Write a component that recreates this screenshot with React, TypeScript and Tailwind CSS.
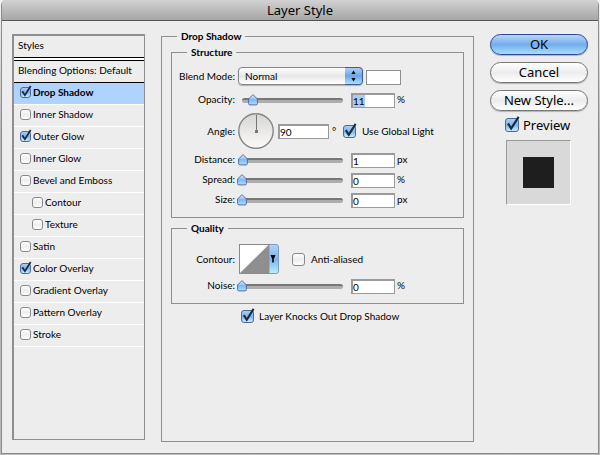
import { useId, useState, type ReactNode } from "react";
import clsx from "clsx";

type Effect = { name: string; checked?: boolean; selected?: boolean; nested?: boolean };

const effects: Effect[] = [
  { name: "Drop Shadow", checked: true, selected: true },
  { name: "Inner Shadow" },
  { name: "Outer Glow", checked: true },
  { name: "Inner Glow" },
  { name: "Bevel and Emboss" },
  { name: "Contour", nested: true },
  { name: "Texture", nested: true },
  { name: "Satin" },
  { name: "Color Overlay", checked: true },
  { name: "Gradient Overlay" },
  { name: "Pattern Overlay" },
  { name: "Stroke" },
];

const boxSizes = {
  sm: "size-[11px]",
  md: "size-[13px]",
  lg: "size-[14px]",
};

function Checkbox({ label, size = "md", defaultChecked = false, className }: { label: string; size?: keyof typeof boxSizes; defaultChecked?: boolean; className?: string }) {
  return (
    <label className={clsx("flex items-center whitespace-nowrap", className)}>
      <span className={clsx("relative shrink-0", boxSizes[size])}>
        <input
          type="checkbox"
          defaultChecked={defaultChecked}
          className="peer block size-full appearance-none rounded-[3px] border border-[#8a8a8a] bg-linear-to-b from-white via-[#eeeeee] to-white checked:border-[#4d6a96] checked:from-[#a9cdf3] checked:via-[#7fb5ee] checked:to-[#c4ecff]"
        />
        <svg viewBox="0 0 14 14" className="pointer-events-none absolute inset-0 hidden size-full overflow-visible peer-checked:block">
          <path d="M3 5.5 L6.2 10.5 L13.6 -1.2" fill="none" stroke="#1c2a3c" strokeWidth="2.2" />
        </svg>
      </span>
      {label}
    </label>
  );
}

function Group({ title, className, children }: { title: string; className?: string; children: ReactNode }) {
  return (
    <fieldset className={clsx("min-w-0 border border-[#8f8f8f]", className)}>
      <legend className="ml-[15px] h-3 px-1 leading-3 font-bold">{title}</legend>
      {children}
    </fieldset>
  );
}

function NumberBox({ id, value, onChange, className }: { id: string; value: string; onChange: (value: string) => void; className: string }) {
  return (
    <input
      id={id}
      type="text"
      value={value}
      onChange={(event) => onChange(event.target.value)}
      className={clsx("h-[15px] shrink-0 border-2 border-r border-b border-[#9a9a9a] bg-white leading-3 outline-none", className)}
    />
  );
}

function SliderRow({ label, initial, unit, highlighted = false }: { label: string; initial: number; unit: string; highlighted?: boolean }) {
  const id = useId();
  const [value, setValue] = useState(String(initial));
  const position = Math.min(100, Math.max(0, Number(value) || 0));

  return (
    <div className="flex h-4 items-start">
      <label htmlFor={id} className="w-[63px] shrink-0 text-right leading-3">{label}</label>
      <div className="relative ml-[7px] h-4 w-[101px] shrink-0">
        <div className="mt-[5px] h-[5px] rounded-full border-t-2 border-[#777777] bg-[#adadad]" />
        <svg viewBox="0 0 10 12" className="absolute top-px h-3 w-[10px] -translate-x-1/2" style={{ left: `${position}%` }}>
          <defs>
            <linearGradient id={`${id}-thumb`} x1="0" y1="0" x2="0" y2="1">
              <stop offset="0" stopColor="#e8f2ff" />
              <stop offset="0.5" stopColor="#7fb8f5" />
              <stop offset="1" stopColor="#aee2ff" />
            </linearGradient>
          </defs>
          <path d="M5 0.6 L9.4 5 V9.5 Q9.4 10.9 8 10.9 H2 Q0.6 10.9 0.6 9.5 V5 Z" fill={`url(#${id}-thumb)`} stroke="#5a6ca8" />
        </svg>
        <input
          type="range"
          min={0}
          max={100}
          value={position}
          aria-label={label}
          onChange={(event) => setValue(event.target.value)}
          className="absolute inset-0 w-full opacity-0"
        />
      </div>
      <NumberBox id={id} value={value} onChange={setValue} className={clsx("ml-2 w-11", highlighted && "bg-linear-to-r from-[#aaccf8] from-[12px] to-white to-[12px]")} />
      <span className="ml-0.5 leading-3">{unit}</span>
    </div>
  );
}

function AngleDial() {
  return (
    <svg viewBox="0 0 36 36" className="ml-[3px] size-9 shrink-0">
      <defs>
        <linearGradient id="dial" x1="0" y1="0" x2="0" y2="1">
          <stop offset="0" stopColor="#d6d6d6" />
          <stop offset="1" stopColor="#fbfaf7" />
        </linearGradient>
      </defs>
      <circle cx="18" cy="18" r="17.2" fill="url(#dial)" stroke="#858585" strokeWidth="1.4" />
      <path d="M18.5 2 V18" stroke="#777777" />
      <rect x="17" y="17" width="3" height="3" fill="#777777" />
    </svg>
  );
}

function ContourPicker() {
  return (
    <button type="button" aria-label="Contour" className="ml-1 h-[30px] w-10 shrink-0">
      <svg viewBox="0 0 40 30" className="size-full">
        <defs>
          <linearGradient id="picker" x1="0" y1="0" x2="0" y2="1">
            <stop offset="0" stopColor="#b5d3f5" />
            <stop offset="0.5" stopColor="#7db4ee" />
            <stop offset="1" stopColor="#bdeeff" />
          </linearGradient>
        </defs>
        <path d="M30 0.5 H37 Q39.5 0.5 39.5 3 V27 Q39.5 29.5 37 29.5 H30 Z" fill="url(#picker)" stroke="#7c9cc4" />
        <rect x="0.5" y="0.5" width="29" height="29" fill="white" stroke="#8a8a8a" />
        <path d="M1 29 L29.5 1 V29.5 H1 Z" fill="#8f8f8f" />
        <path d="M31.5 11 H36.5 L34.8 15 V18.5 H33.2 V15 Z" fill="black" />
      </svg>
    </button>
  );
}

function DialogButton({ primary = false, children }: { primary?: boolean; children: ReactNode }) {
  return (
    <button
      type="button"
      className={clsx(
        "h-[21px] w-full rounded-full border pb-0.5 font-['Noto_Sans',sans-serif] text-[13px] leading-4 shadow-[0_1px_1px_#00000040]",
        primary
          ? "border-[#2c4795] bg-linear-to-b from-[#b9d6f8] via-[#72aeeb] to-[#a9dcff]"
          : "border-[#777777] bg-linear-to-b from-white via-[#ececec] to-white",
      )}
    >
      {children}
    </button>
  );
}

export default function App() {
  const [angle, setAngle] = useState("90");

  return (
    <div className="flex min-h-screen bg-linear-to-b from-[#f4f4f4] to-[#b8b8b8] to-30% px-px pb-px font-[Lato,sans-serif] text-[10px] text-black">
      <main className="flex flex-1 flex-col rounded-t-[5px] border-x border-b border-[#8c8c8c] bg-[#ededed]">
        <header className="h-[21px] rounded-t-[4px] border-b border-[#555555] bg-linear-to-b from-[#d2d2d2] to-[#a6a6a6] text-center">
          <h1 className="font-['Noto_Sans',sans-serif] text-[13px] leading-5">Layer Style</h1>
        </header>

        <div className="flex flex-1 pr-2.5 pl-2.5">
          <aside className="my-[13px] w-[133px] shrink-0 border border-t-2 border-l-2 border-[#8f8f8f]">
            <h2 className="h-[21px] pl-1 leading-[18px]">Styles</h2>
            <div className="h-1 border-y border-black bg-white" />
            <p className="h-[22px] border-b border-black pl-1 leading-[18px] whitespace-nowrap">Blending Options: Default</p>
            <ul>
              {effects.map((effect) => (
                <li key={effect.name} className={clsx("h-[22px] border-b border-white", effect.selected && "bg-[#b0d2ff] font-bold")}>
                  <Checkbox
                    label={effect.name}
                    size="sm"
                    defaultChecked={effect.checked}
                    className={clsx("h-[19px] gap-0.5", effect.nested ? "pl-[18px]" : "pl-1.5")}
                  />
                </li>
              ))}
            </ul>
          </aside>

          <Group title="Drop Shadow" className="mt-[9px] mb-[11px] ml-4 flex-1">
            <div className="px-[9px] pt-1">
              <Group title="Structure" className="pt-[9px] pb-2">
                <div className="flex flex-col gap-1">
                  <div className="flex h-[22px] items-start">
                    <label htmlFor="blend-mode" className="w-[63px] shrink-0 text-right leading-[18px]">Blend Mode:</label>
                    <div className="relative ml-[3px] h-[18px] w-[125px] shrink-0">
                      <select
                        id="blend-mode"
                        className="size-full appearance-none rounded-[4px] border border-[#858585] bg-linear-to-b from-white via-[#e6e6e6] to-white pl-1.5 leading-4 shadow-[0_1px_1px_#00000040] outline-none"
                      >
                        <option>Normal</option>
                      </select>
                      <svg viewBox="0 0 18 18" className="pointer-events-none absolute top-0 right-0 size-[18px]">
                        <defs>
                          <linearGradient id="stepper" x1="0" y1="0" x2="0" y2="1">
                            <stop offset="0" stopColor="#b4d2f5" />
                            <stop offset="0.5" stopColor="#69a6e8" />
                            <stop offset="1" stopColor="#b0e4ff" />
                          </linearGradient>
                        </defs>
                        <path d="M0 0.5 H14 Q17.5 0.5 17.5 4 V14 Q17.5 17.5 14 17.5 H0 Z" fill="url(#stepper)" />
                        <path d="M0 0.5 H14 Q17.5 0.5 17.5 4 V14 Q17.5 17.5 14 17.5 H0" fill="none" stroke="#3f5a9c" />
                        <path d="M6.4 7 L8.5 3.6 L10.6 7 Z M6.4 11 L8.5 14.4 L10.6 11 Z" fill="black" />
                      </svg>
                    </div>
                    <button type="button" aria-label="Shadow color" className="mt-[3px] ml-[3px] h-[15px] w-[35px] shrink-0 border border-[#8f8f8f] bg-white" />
                  </div>

                  <SliderRow label="Opacity:" initial={11} unit="%" highlighted />

                  <div className="flex h-9 items-center">
                    <label htmlFor="angle" className="w-[63px] shrink-0 text-right leading-3">Angle:</label>
                    <AngleDial />
                    <NumberBox id="angle" value={angle} onChange={setAngle} className="ml-1 w-[51px]" />
                    <span className="w-3.5 pl-[3px] leading-3">°</span>
                    <Checkbox label="Use Global Light" defaultChecked className="gap-1.5" />
                  </div>

                  <SliderRow label="Distance:" initial={1} unit="px" />
                  <SliderRow label="Spread:" initial={0} unit="%" />
                  <SliderRow label="Size:" initial={0} unit="px" />
                </div>
              </Group>

              <Group title="Quality" className="mt-1 pt-2.5 pb-2">
                <div className="flex flex-col gap-[5px]">
                  <div className="flex h-[30px] items-center">
                    <span className="w-[63px] shrink-0 text-right leading-3">Contour:</span>
                    <ContourPicker />
                    <Checkbox label="Anti-aliased" className="ml-[13px] gap-1.5" />
                  </div>
                  <SliderRow label="Noise:" initial={0} unit="%" />
                </div>
              </Group>

              <Checkbox label="Layer Knocks Out Drop Shadow" defaultChecked className="mt-[5px] ml-[70px] gap-[5px]" />
            </div>
          </Group>

          <div className="ml-4 flex w-[98px] shrink-0 flex-col pt-[13px]">
            <div className="flex flex-col gap-[7px]">
              <DialogButton primary>OK</DialogButton>
              <DialogButton>Cancel</DialogButton>
              <DialogButton>New Style...</DialogButton>
            </div>
            <Checkbox label="Preview" size="lg" defaultChecked className="mt-1 ml-[15px] gap-1 font-['Noto_Sans',sans-serif] text-[13px] leading-5" />
            <div className="mt-[5px] ml-4 flex size-[65px] items-center justify-center border border-t-[#999999] border-r-white border-b-white border-l-[#999999] bg-[#d9d9d9]">
              <div className="size-[31px] bg-[#1e1e1e]" />
            </div>
          </div>
        </div>
      </main>
    </div>
  );
}
